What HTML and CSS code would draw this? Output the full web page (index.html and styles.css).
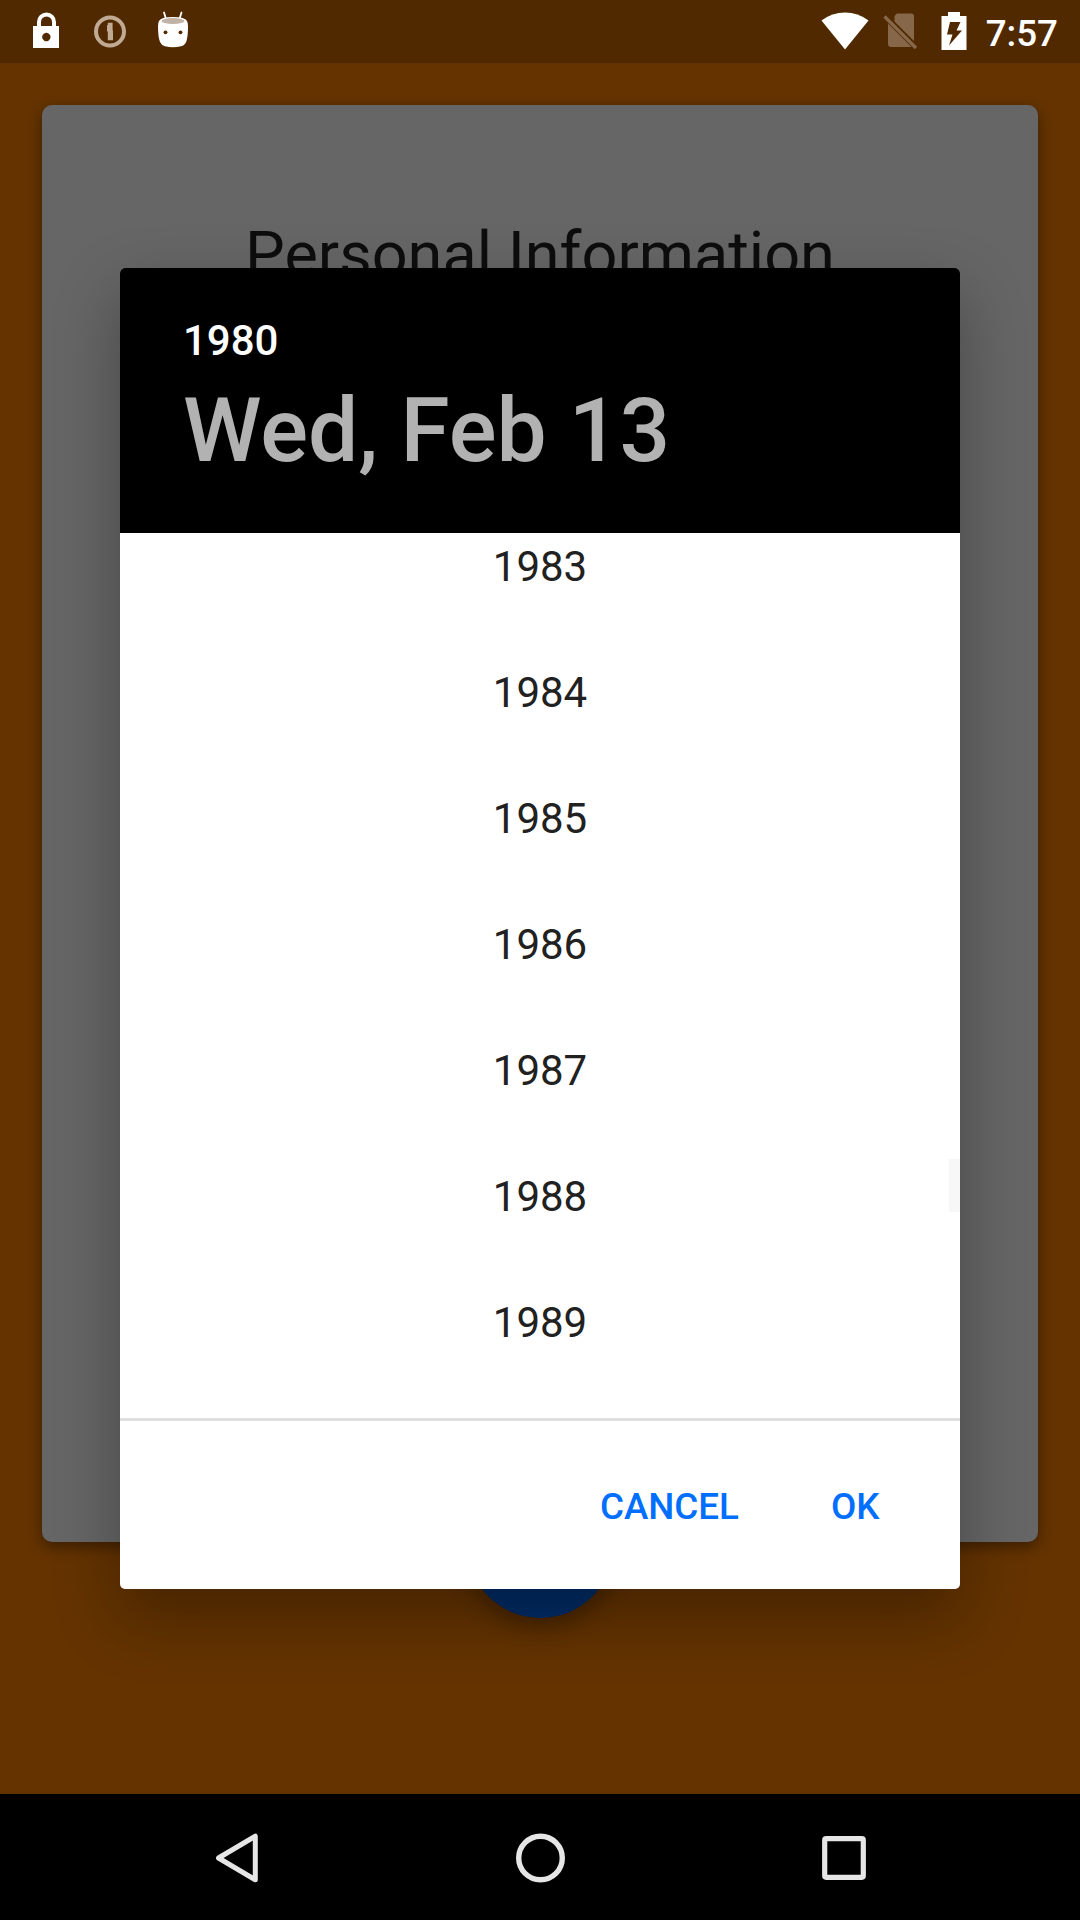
FILE: index.html
```html
<!DOCTYPE html>
<html lang="en">
<head>
<meta charset="utf-8">
<title>Personal Information</title>
<link rel="stylesheet" href="styles.css">
</head>
<body>
<div class="screen">
  <header class="status-bar">
    <div class="status-group notifications">
      <svg width="27" height="37" viewBox="0 0 27 37"><path fill="#fff" fill-rule="evenodd" d="M4 14V10A9.500 9.500 0 0 1 23 10V14H26V36H0V14ZM8 14H19V10A5.500 5.500 0 0 0 8 10ZM13.300 20.800A4.200 4.200 0 1 0 13.400 20.800Z"/></svg>
      <svg class="info" width="32" height="33" viewBox="0 0 32 33"><circle cx="16" cy="16.500" r="14" fill="none" stroke="#c1aa93" stroke-width="4"/><path fill="#c1aa93" d="M13.800 7.700H18.600V15L19 16V25.300H13.800V17L13 16V10.500L13.800 10Z"/></svg>
      <svg class="robot" width="32" height="37" viewBox="0 0 32 37"><path d="M7 1.500L9 8M24.500 1.500L22.500 8" stroke="#fff" stroke-width="1.800" stroke-linecap="round"/><path fill="#fff" d="M2 10Q1 12 1 15Q1 26 3 31Q4.500 34.500 8 35.300Q16 37 24 35.300Q28 34.500 29.500 30Q31 25 31 15Q31 12 30 10Q28 6 16 6Q4 6 2 10Z"/><ellipse cx="16" cy="10" rx="11.500" ry="3" fill="#c0b2a4"/><circle cx="8.500" cy="21.300" r="1.900" fill="#522900"/><circle cx="23.500" cy="21.300" r="1.900" fill="#522900"/></svg>
    </div>
    <div class="status-group system">
      <svg width="48" height="38" viewBox="0 0 48 38"><path fill="#fff" d="M.5 8.500Q11 .5 24 .5Q37 .5 47.500 8.500L24 37.500Z"/></svg>
      <svg class="sim" width="35" height="37" viewBox="0 0 35 37"><path fill="#866749" d="M14 .5H28Q31 .5 31 3.500V28L11.500 8.500V3ZM5 10.500L28.500 34H8Q5 34 5 31Z"/><path d="M1.500 3.500L33 35" stroke="#866749" stroke-width="3.300"/></svg>
      <svg width="26" height="38" viewBox="0 0 26 38"><path fill="#fff" fill-rule="evenodd" d="M7 0H19V4H25.500V38H.5V4H7ZM9 10L6 22.500H11.500L8 33.500L21 18.500H15.500L19.500 10Z"/></svg>
      <span class="clock">7:57</span>
    </div>
  </header>
  <main class="page">
    <section class="card"><h1 class="card-title">Personal Information</h1></section>
    <div class="fab"></div>
    <div class="dialog">
      <div class="dialog-header">
        <div class="header-year">1980</div>
        <div class="header-date">Wed, Feb 13</div>
      </div>
      <div class="years">
        <div class="year">1983</div>
        <div class="year">1984</div>
        <div class="year">1985</div>
        <div class="year">1986</div>
        <div class="year">1987</div>
        <div class="year">1988</div>
        <div class="year">1989</div>
        <div class="scroll-thumb"></div>
      </div>
      <div class="actions">
        <span class="action">CANCEL</span>
        <span class="action">OK</span>
      </div>
    </div>
  </main>
  <nav class="nav-bar">
    <svg width="52" height="52" viewBox="0 0 52 52"><path d="M45.300 4.200V47.800L8.500 26Z" fill="none" stroke="#e6e6e6" stroke-width="5" stroke-linejoin="round"/></svg>
    <svg width="52" height="52" viewBox="0 0 52 52"><circle cx="26.500" cy="26" r="21.800" fill="none" stroke="#e6e6e6" stroke-width="5.400"/></svg>
    <svg width="52" height="52" viewBox="0 0 52 52"><rect x="6.700" y="6.700" width="38.600" height="38.600" rx="1.500" fill="none" stroke="#e6e6e6" stroke-width="5.200"/></svg>
  </nav>
</div>
</body>
</html>
```
FILE: styles.css
```css
* { box-sizing: border-box; }
body { margin: 0; font-family: Roboto, "Noto Sans", sans-serif; }
svg { display: block; flex: none; }

.screen {
  width: 1080px;
  height: 1920px;
  display: flex;
  flex-direction: column;
  overflow: hidden;
  background: #643300;
}

.status-bar {
  flex: none;
  height: 63px;
  padding: 0 22px 0 33px;
  display: flex;
  justify-content: space-between;
  background: #502900;
}
.status-group { display: flex; align-items: center; }
.notifications { gap: 34px; padding-bottom: 2px; }
.info { margin-top: 2px; }
.robot { margin: 0 0 3px -3px; }
.system { padding-bottom: 1px; }
.sim { margin: 1px 23px 0 14px; }
.clock {
  margin: 4px 0 0 18.5px;
  font-size: 36.75px;
  line-height: 43px;
  font-weight: 500;
  color: #fff;
}

.page {
  position: relative;
  flex: 1;
  padding: 42px;
}
.card {
  height: 1437px;
  padding-top: 110px;
  border-radius: 10px;
  background: #666;
  box-shadow: 0 5px 14px rgba(0, 0, 0, .4);
}
.card-title {
  margin: 0;
  font-size: 63px;
  line-height: 80px;
  font-weight: 400;
  text-align: center;
  color: #0d0d0d;
}
.fab {
  width: 147px;
  height: 147px;
  margin: -71px auto 0;
  border-radius: 50%;
  background: #002c66;
  box-shadow: 0 10px 22px rgba(0, 0, 0, .3);
}

.dialog {
  position: absolute;
  left: 120px;
  top: 205px;
  width: 840px;
  height: 1320.5px;
  display: flex;
  flex-direction: column;
  overflow: hidden;
  border-radius: 5px;
  background: #fff;
  box-shadow: 0 26px 66px rgba(0, 0, 0, .31);
}
.dialog-header {
  flex: none;
  height: 265px;
  padding: 48px 63px 0;
  background: #000;
  font-weight: 500;
}
.header-year { font-size: 42px; line-height: 49px; color: #fff; }
.header-date { margin-top: 13px; font-size: 89.25px; line-height: 105px; color: #b2b2b2; }

.years {
  position: relative;
  flex: none;
  height: 887.5px;
  overflow: hidden;
  border-bottom: 3px solid #e0e0e0;
}
.year {
  height: 126px;
  line-height: 126px;
  font-size: 42px;
  text-align: center;
  color: #212121;
}
.year:first-child { margin-top: -29px; }
.scroll-thumb {
  position: absolute;
  right: 0;
  top: 626px;
  width: 11px;
  height: 53px;
  background: #f7f7f7;
}

.actions {
  flex: 1;
  display: flex;
  justify-content: flex-end;
  align-items: center;
  gap: 92px;
  padding: 3px 80.5px 0 0;
  font-size: 36.75px;
  font-weight: 500;
  color: #006eff;
}

.nav-bar {
  flex: none;
  height: 126px;
  padding: 1px 210px 0;
  display: flex;
  align-items: center;
  justify-content: space-between;
  background: #000;
}
```
